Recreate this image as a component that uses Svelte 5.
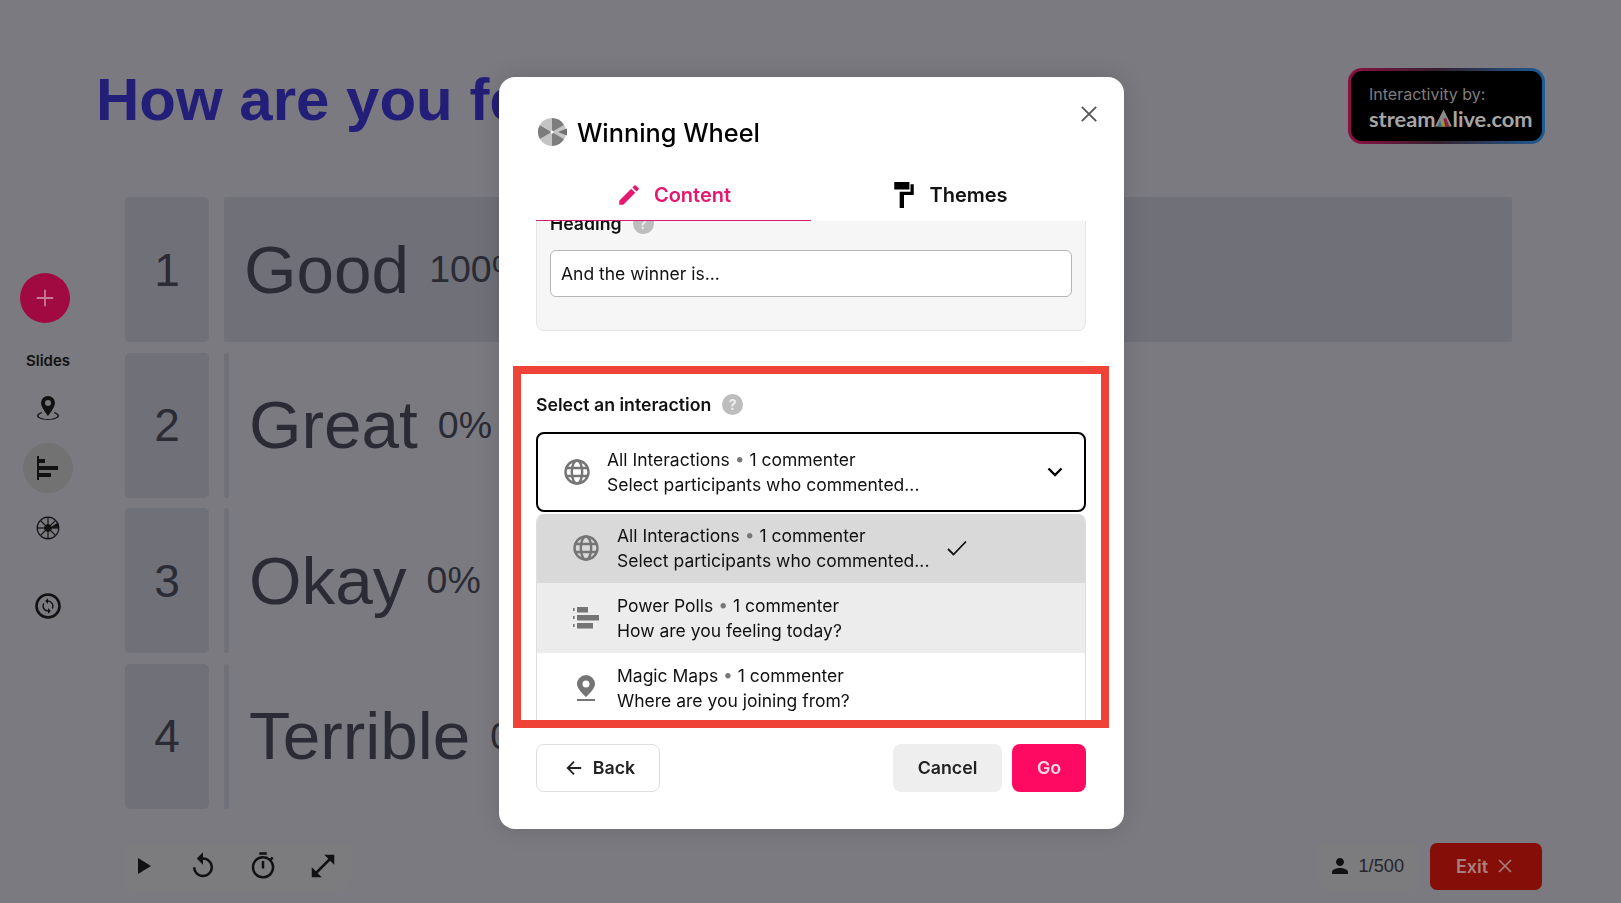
<script lang="ts">
	const rows = [
		{ n: 1, label: 'Good', pct: '100%', full: true },
		{ n: 2, label: 'Great', pct: '0%', full: false },
		{ n: 3, label: 'Okay', pct: '0%', full: false },
		{ n: 4, label: 'Terrible', pct: '0%', full: false }
	];

	const options = [
		{ icon: 'globe', name: 'All Interactions', sub: 'Select participants who commented...', tone: 'picked' },
		{ icon: 'bars', name: 'Power Polls', sub: 'How are you feeling today?', tone: 'hover' },
		{ icon: 'pin', name: 'Magic Maps', sub: 'Where are you joining from?', tone: '' }
	];

	// wedge path for the wheel logo, angles in degrees, centred on 15,15
	function wedge(from: number, to: number, r = 14) {
		const rad = (d: number) => (d * Math.PI) / 180;
		const x1 = 15 + r * Math.cos(rad(from));
		const y1 = 15 + r * Math.sin(rad(from));
		const x2 = 15 + r * Math.cos(rad(to));
		const y2 = 15 + r * Math.sin(rad(to));
		return `M15 15L${x1.toFixed(2)} ${y1.toFixed(2)}A${r} ${r} 0 0 1 ${x2.toFixed(2)} ${y2.toFixed(2)}Z`;
	}
	const wedges = [0, 1, 2, 3, 4, 5].map((i) => ({
		d: wedge(i * 60 - 30, i * 60 + 30),
		dark: i % 2 === 1
	}));
	const spokes = [0, 45, 90, 135];
</script>

{#snippet globe()}
	<svg class="opt-icon" viewBox="0 0 26 26" fill="none" stroke="#757575" stroke-width="2.4">
		<circle cx="13" cy="13" r="11.5" />
		<ellipse cx="13" cy="13" rx="5.2" ry="11.5" />
		<path d="M2.5 9h21M2.5 17h21" />
	</svg>
{/snippet}

{#snippet bars()}
	<svg class="opt-icon" viewBox="0 0 26 26" fill="#757575">
		<rect x="4" y="2" width="11" height="5.5" />
		<rect x="4" y="10" width="22" height="5.5" />
		<rect x="4" y="18" width="16" height="5.5" />
		<rect x="0" y="3" width="1.6" height="3" />
		<rect x="0" y="11" width="1.6" height="3" />
		<rect x="0" y="19" width="1.6" height="3" />
	</svg>
{/snippet}

{#snippet pin()}
	<svg class="opt-icon" viewBox="0 0 26 26" fill="#757575">
		<path fill-rule="evenodd" d="M13 0a9 9 0 0 0-9 9c0 5.500 9 13 9 13s9-7.500 9-13a9 9 0 0 0-9-9zm0 5.500a3.500 3.500 0 1 1 0 7 3.500 3.500 0 0 1 0-7z" />
		<rect x="4" y="24" width="18" height="2" />
	</svg>
{/snippet}

{#snippet help()}
	<span class="help">?</span>
{/snippet}

<div class="page">
	<header class="top">
		<h1>How are you feeling today?</h1>
		<div class="badge">
			<div class="badge-inner">
				<span class="by">Interactivity by:</span>
				<span class="brand">stream<svg class="brand-a" viewBox="0 0 20 20"><path d="M10 0l10 20H0z" fill="#8a8a8a" /><path d="M6 20l4-9 2 9z" fill="#a8902a" /><path d="M12 20l-2-9 3-1 4 10z" fill="#8c1f3c" /><path d="M3 20l3-7 2 7z" fill="#2a6f9a" /></svg>live.com</span>
			</div>
		</div>
	</header>

	<div class="middle">
		<aside class="sidebar">
			<button class="plus" aria-label="Add">
				<svg viewBox="0 0 24 24" fill="none" stroke="#c77a92" stroke-width="2"><path d="M12 3v18M3 12h18" /></svg>
			</button>
			<span class="slides">Slides</span>
			<div class="tool">
				<svg viewBox="0 0 24 24" fill="#111"><path fill-rule="evenodd" d="M12 0a7 7 0 0 0-7 7c0 4.500 7 13 7 13s7-8.500 7-13a7 7 0 0 0-7-7zm0 4a3 3 0 1 1 0 6 3 3 0 0 1 0-6z" /><path d="M5.500 16C2.800 17 1 18.300 1 19.800 1 22.100 6 24 12 24s11-1.900 11-4.200c0-1.500-1.800-2.800-4.500-3.800l-.6.900c2.200.8 3.600 1.900 3.600 2.900 0 1.600-4 3.200-9.500 3.200s-9.500-1.600-9.500-3.200c0-1 1.400-2.100 3.600-2.900z" /></svg>
			</div>
			<div class="tool active">
				<svg viewBox="0 0 24 24" fill="#111"><rect x="1" y="0" width="2" height="24" /><rect x="3" y="3" width="6" height="4" /><rect x="3" y="10" width="19" height="4" /><rect x="3" y="17" width="12" height="4" /></svg>
			</div>
			<div class="tool">
				<svg viewBox="0 0 30 30" fill="none" stroke="#111" stroke-width="1.500">
					<circle cx="15" cy="15" r="13.500" />
					{#each spokes as a}
						<path d="M15 1.500v27" transform="rotate({a} 15 15)" />
					{/each}
					<circle cx="15" cy="15" r="4" fill="#111" />
					<path d="M20 14l7-5 1 5z" fill="#111" />
				</svg>
			</div>
			<div class="tool sync">
				<svg viewBox="0 0 26 26">
					<circle cx="13" cy="13" r="11.500" fill="none" stroke="#111" stroke-width="2.600" />
					<path fill="#111" transform="translate(4.600 4.600) scale(.7)" d="M12 4V1L8 5l4 4V6c3.310 0 6 2.690 6 6 0 1.010-.25 1.970-.7 2.800l1.460 1.460A7.930 7.930 0 0 0 20 12c0-4.420-3.580-8-8-8zm0 14c-3.310 0-6-2.690-6-6 0-1.010.25-1.970.7-2.800L5.240 7.740A7.930 7.930 0 0 0 4 12c0 4.420 3.580 8 8 8v3l4-4-4-4v3z" />
				</svg>
			</div>
		</aside>

		<section class="rows">
			{#each rows as r}
				<div class="row">
					<div class="num">{r.n}</div>
					<div class="bar-track">
						<div class="bar" class:full={r.full}></div>
						<div class="answer" class:first={r.full}>
							<span class="label">{r.label}</span>
							<span class="pct">{r.pct}</span>
						</div>
					</div>
				</div>
			{/each}
		</section>
	</div>

	<footer class="bottom">
		<div class="controls">
			<svg viewBox="0 0 24 24" fill="#111"><path d="M8 5.600l10.400 6.400-10.400 6.400z" /></svg>
			<svg viewBox="0 0 24 24" fill="#111"><path d="M12 5V1L7 6l5 5V7c3.310 0 6 2.690 6 6s-2.690 6-6 6-6-2.690-6-6H4c0 4.420 3.580 8 8 8s8-3.580 8-8-3.580-8-8-8z" /></svg>
			<svg viewBox="0 0 24 24" fill="#111"><path d="M15 1H9v2h6V1zm-4 13h2V8h-2v6zm8.030-6.610 1.420-1.420c-.43-.51-.9-.99-1.410-1.410l-1.420 1.420A8.962 8.962 0 0 0 12 4a9 9 0 0 0-9 9 9 9 0 0 0 9 9 9 9 0 0 0 7.030-14.610zM12 20c-3.870 0-7-3.130-7-7s3.130-7 7-7 7 3.130 7 7-3.130 7-7 7z" /></svg>
			<svg viewBox="0 0 24 24" fill="#111"><path d="M21 11V3h-8l3.290 3.290-10 10L3 13v8h8l-3.290-3.290 10-10z" /></svg>
		</div>
		<div class="session">
			<div class="seats">
				<svg viewBox="0 0 24 24" fill="#111"><path d="M12 12c2.210 0 4-1.790 4-4s-1.790-4-4-4-4 1.790-4 4 1.790 4 4 4zm0 2c-2.670 0-8 1.340-8 4v2h16v-2c0-2.660-5.330-4-8-4z" /></svg>
				<span class="count">1/500</span>
			</div>
			<button class="exit">Exit
				<svg viewBox="0 0 24 24" fill="none" stroke="#a87f7c" stroke-width="2.200"><path d="M4 4l16 16M20 4L4 20" /></svg>
			</button>
		</div>
	</footer>
</div>

<div class="overlay">
	<div class="modal" role="dialog">
		<button class="close" aria-label="Close">
			<svg viewBox="0 0 20 20" fill="none" stroke="#555" stroke-width="2"><path d="M2 2l16 16M18 2L2 18" /></svg>
		</button>

		<div class="title">
			<svg class="wheel" viewBox="0 0 30 30">
				{#each wedges as w}
					<path d={w.d} fill={w.dark ? '#7d7d7d' : '#c4c4c4'} />
				{/each}
				<circle cx="15" cy="15" r="1.500" fill="#fff" />
				<path d="M21 15l9-3.500v7z" fill="#6f6f6f" />
			</svg>
			<h2>Winning Wheel</h2>
		</div>

		<nav class="tabs">
			<div class="tab current">
				<svg viewBox="0 0 24 24" fill="#e6186d"><path d="M3 17.250V21h3.750L17.810 9.940l-3.750-3.750L3 17.250zM20.710 7.040a1 1 0 0 0 0-1.410l-2.340-2.340a1 1 0 0 0-1.410 0l-1.830 1.830 3.750 3.750 1.830-1.830z" /></svg>
				<span>Content</span>
			</div>
			<div class="tab">
				<svg viewBox="0 0 24 24" fill="#000"><path d="M3 0h14v7H3zM17 2h4v10H12v12H8V9h10V2z" /></svg>
				<span>Themes</span>
			</div>
		</nav>

		<div class="body">
			<div class="card">
				<div class="field-label"><span>Heading</span>{@render help()}</div>
				<div class="input">And the winner is...</div>
			</div>

			<div class="section">
				<div class="select-label"><span>Select an interaction</span>{@render help()}</div>
				<div class="select">
					{@render globe()}
					<div class="lines">
						<div>All Interactions <i>•</i> 1 commenter</div>
						<div>Select participants who commented...</div>
					</div>
					<svg class="chevron" viewBox="0 0 16 10" fill="none" stroke="#000" stroke-width="2.400"><path d="M1.500 1.500L8 8l6.500-6.500" /></svg>
				</div>
				<ul class="list">
					{#each options as o}
						<li class={o.tone}>
							{#if o.icon === 'globe'}
								{@render globe()}
							{:else if o.icon === 'bars'}
								{@render bars()}
							{:else}
								{@render pin()}
							{/if}
							<div class="lines">
								<div>{o.name} <i>•</i> 1 commenter</div>
								<div>{o.sub}</div>
							</div>
							{#if o.tone === 'picked'}
								<svg class="check" viewBox="0 0 20 16" fill="none" stroke="#111" stroke-width="1.800"><path d="M1 9l5.500 5.500L19 1.500" /></svg>
							{/if}
						</li>
					{/each}
				</ul>
			</div>
		</div>

		<div class="actions">
			<button class="btn back">
				<svg viewBox="0 0 20 20" fill="none" stroke="#222" stroke-width="2"><path d="M18 10H3M10 3l-7 7 7 7" /></svg>
				Back
			</button>
			<div class="right">
				<button class="btn cancel">Cancel</button>
				<button class="btn go">Go</button>
			</div>
		</div>

		<div class="frame"></div>
	</div>
</div>

<style>
	:global(body) {
		margin: 0;
		background: #7a7a80;
		font-family: Inter, 'Liberation Sans', sans-serif;
	}

	button {
		font-family: inherit;
		border: 0;
		padding: 0;
		background: none;
	}

	.page {
		width: 1621px;
		height: 903px;
		display: flex;
		flex-direction: column;
		overflow: hidden;
		background: #7a7a80;
		font-family: 'Liberation Sans', sans-serif;
	}

	.top {
		height: 197px;
		box-sizing: border-box;
		padding: 68px 76px 0 96px;
		display: flex;
		justify-content: space-between;
		align-items: flex-start;
	}

	h1 {
		margin: 1px 0 0;
		font-size: 60px;
		line-height: 62px;
		font-weight: 700;
		color: #231f78;
		white-space: nowrap;
	}

	.badge {
		width: 197px;
		height: 76px;
		box-sizing: border-box;
		padding: 3px;
		border-radius: 14px;
		background: linear-gradient(90deg, #8e0f41 0%, #34202e 45%, #1d5c94 100%);
	}

	.badge-inner {
		height: 100%;
		box-sizing: border-box;
		padding: 13px 0 0 18px;
		border-radius: 11px;
		background: #000;
		display: flex;
		flex-direction: column;
		gap: 2px;
		font-family: Inter, sans-serif;
	}

	.by {
		font-size: 16px;
		line-height: 20px;
		color: #7d7d7d;
	}

	.brand {
		display: flex;
		align-items: center;
		font-family: Lato, sans-serif;
		font-size: 21.800px;
		line-height: 26px;
		font-weight: 700;
		color: #a6a6a6;
	}

	.brand-a {
		width: 17px;
		height: 18px;
		margin-top: -2px;
	}

	.middle {
		height: 612px;
		display: flex;
	}

	.sidebar {
		width: 96px;
		padding-top: 76px;
		box-sizing: border-box;
		display: flex;
		flex-direction: column;
		align-items: center;
		flex: none;
	}

	.plus {
		width: 50px;
		height: 50px;
		margin-right: 6px;
		border-radius: 50%;
		background: #a10a40;
		display: flex;
		align-items: center;
		justify-content: center;
	}

	.plus svg {
		width: 22px;
		height: 22px;
	}

	.slides {
		margin-top: 28px;
		font-family: Inter, sans-serif;
		font-size: 15px;
		line-height: 20px;
		font-weight: 600;
		color: #111;
	}

	.tool {
		width: 50px;
		height: 50px;
		margin-top: 12px;
		border-radius: 50%;
		display: flex;
		align-items: center;
		justify-content: center;
	}

	.tool + .tool {
		margin-top: 10px;
	}

	.tool svg {
		width: 24px;
		height: 24px;
	}

	.tool.active {
		background: #727272;
	}

	.tool + .tool.sync {
		margin-top: 28px;
	}

	.tool.sync svg {
		width: 26px;
		height: 26px;
	}

	.rows {
		flex: 1;
		margin: 0 109px 0 29px;
		display: grid;
		grid-auto-rows: 145px;
		row-gap: 10.500px;
	}

	.row {
		display: grid;
		grid-template-columns: 84px 1fr;
		column-gap: 15px;
	}

	.num {
		border-radius: 5px;
		background: #6f7078;
		color: #2a2b34;
		font-size: 46px;
		display: flex;
		align-items: center;
		justify-content: center;
	}

	.bar-track {
		position: relative;
		display: flex;
		align-items: center;
	}

	.bar {
		position: absolute;
		inset: 0 auto 0 0;
		width: 5px;
		background: #6f7078;
		border-radius: 3px;
	}

	.bar.full {
		width: 100%;
	}

	.answer {
		position: relative;
		padding-left: 25px;
		display: flex;
		align-items: center;
		gap: 20px;
		color: #2a2b34;
	}

	.answer.first {
		padding-left: 20px;
	}

	.label {
		font-size: 67.500px;
		line-height: 80px;
	}

	.pct {
		font-size: 37.500px;
	}

	.bottom {
		flex: 1;
		padding: 20px 79px 0 125px;
		display: flex;
		justify-content: space-between;
		align-items: center;
	}

	.controls {
		display: flex;
		gap: 30px;
		padding: 9px 13px 9px 3px;
		border-radius: 8px;
		background: #7c7c7e;
	}

	.controls svg {
		width: 30px;
		height: 30px;
	}

	.session {
		display: flex;
		align-items: center;
		gap: 10px;
	}

	.seats {
		display: flex;
		align-items: center;
		height: 47px;
		padding: 0 16px 0 10px;
		border-radius: 8px;
		background: #7c7c7e;
	}

	.seats svg {
		width: 24px;
		height: 24px;
	}

	.count {
		margin-left: 6px;
		font-size: 18.200px;
		color: #25252b;
	}

	.exit {
		width: 112px;
		height: 47px;
		padding-right: 2px;
		box-sizing: border-box;
		border-radius: 7px;
		background: #850f08;
		color: #a87f7c;
		font-family: Inter, sans-serif;
		font-size: 18px;
		font-weight: 600;
		display: flex;
		align-items: center;
		justify-content: center;
		gap: 8px;
	}

	.exit svg {
		width: 18px;
		height: 18px;
	}

	.overlay {
		position: fixed;
		inset: 0;
		padding: 2px 0 0 2px;
		display: flex;
		align-items: center;
		justify-content: center;
	}

	.modal {
		position: relative;
		width: 625px;
		height: 752px;
		box-sizing: border-box;
		padding: 0 38px 37px 37px;
		border-radius: 16px;
		background: #fff;
		box-shadow: 0 0 24px rgba(0, 0, 0, 0.14);
		display: flex;
		flex-direction: column;
		font-family: Inter, sans-serif;
	}

	.close {
		position: absolute;
		top: 28px;
		right: 26px;
		width: 18px;
		height: 18px;
	}

	.close svg {
		display: block;
		width: 100%;
		height: 100%;
	}

	.title {
		height: 94px;
		padding: 17px 0 0 1px;
		box-sizing: border-box;
		display: flex;
		align-items: center;
		gap: 10px;
		flex: none;
	}

	.wheel {
		width: 30px;
		height: 30px;
	}

	h2 {
		margin: 0;
		font-size: 25.300px;
		font-weight: 500;
		color: #000;
	}

	.tabs {
		height: 50px;
		display: grid;
		grid-template-columns: 1fr 1fr;
		flex: none;
	}

	.tab {
		display: flex;
		align-items: center;
		justify-content: center;
		gap: 12px;
		font-size: 20px;
		font-weight: 600;
		color: #111;
		box-sizing: border-box;
		border-bottom: 1.500px solid transparent;
		position: relative;
		z-index: 1;
	}

	.tab + .tab {
		padding-left: 2px;
	}

	.tab svg {
		width: 26px;
		height: 26px;
	}

	.tab.current {
		color: #e6186d;
		border-bottom-color: #d81b72;
	}

	.body {
		flex: 1;
		min-height: 0;
		overflow: hidden;
	}

	.card {
		margin-top: -21px;
		padding: 13px 13px 33px;
		border: 1px solid #e6e6e6;
		border-radius: 8px;
		background: #f6f6f6;
	}

	.field-label,
	.select-label {
		display: flex;
		align-items: center;
		gap: 11px;
		height: 20px;
		font-size: 17.700px;
		font-weight: 600;
		color: #111;
	}

	.help {
		width: 21px;
		height: 21px;
		border-radius: 50%;
		background: #bdbdbd;
		color: #eee;
		font-size: 14px;
		font-weight: 700;
		display: flex;
		align-items: center;
		justify-content: center;
	}

	.input {
		margin-top: 16px;
		height: 47px;
		box-sizing: border-box;
		padding-left: 10px;
		border: 1px solid #b5b5b5;
		border-radius: 6px;
		background: #fff;
		font-size: 17.500px;
		color: #111;
		display: flex;
		align-items: center;
	}

	.section {
		margin-top: 30px;
		padding-top: 33px;
		border-top: 1px solid #eee;
	}

	.select {
		margin-top: 17px;
		height: 80px;
		box-sizing: border-box;
		padding: 0 21px 0 26px;
		border: 2px solid #000;
		border-radius: 8px;
		display: flex;
		align-items: center;
		gap: 17px;
	}

	.lines {
		font-size: 17.500px;
		line-height: 25px;
		color: #111;
	}

	.lines i {
		font-style: normal;
		color: #777;
	}

	.opt-icon {
		width: 26px;
		height: 26px;
		flex: none;
	}

	.chevron {
		margin-left: auto;
		width: 16px;
		height: 10px;
	}

	.list {
		list-style: none;
		margin: 2px 0 0;
		padding: 0;
		border: solid #ddd;
		border-width: 0 1px;
		border-radius: 8px 8px 0 0;
		overflow: hidden;
	}

	.list li {
		height: 70px;
		box-sizing: border-box;
		padding-left: 36px;
		display: flex;
		align-items: center;
		gap: 18px;
	}

	.list li.picked {
		height: 69px;
		background: #d9d9d9;
	}

	.list li.hover {
		background: #ececec;
	}

	.check {
		width: 20px;
		height: 16px;
		flex: none;
	}

	.actions {
		margin-top: 16px;
		display: flex;
		justify-content: space-between;
		flex: none;
	}

	.right {
		display: flex;
		gap: 10px;
	}

	.btn {
		height: 48px;
		border-radius: 8px;
		font-size: 17.800px;
		font-weight: 600;
		display: flex;
		align-items: center;
		justify-content: center;
		gap: 10px;
		color: #222;
	}

	.back {
		width: 124px;
		padding-left: 4px;
		box-sizing: border-box;
		border: 1px solid #ddd;
		background: #fff;
	}

	.back svg {
		width: 18px;
		height: 18px;
	}

	.cancel {
		width: 109px;
		background: #eee;
	}

	.go {
		width: 74px;
		background: #ff0a62;
		color: #f5dbe6;
	}

	.frame {
		position: absolute;
		left: 14px;
		top: 289px;
		width: 596px;
		height: 362px;
		box-sizing: border-box;
		border: 8px solid #ef4338;
		pointer-events: none;
	}
</style>
